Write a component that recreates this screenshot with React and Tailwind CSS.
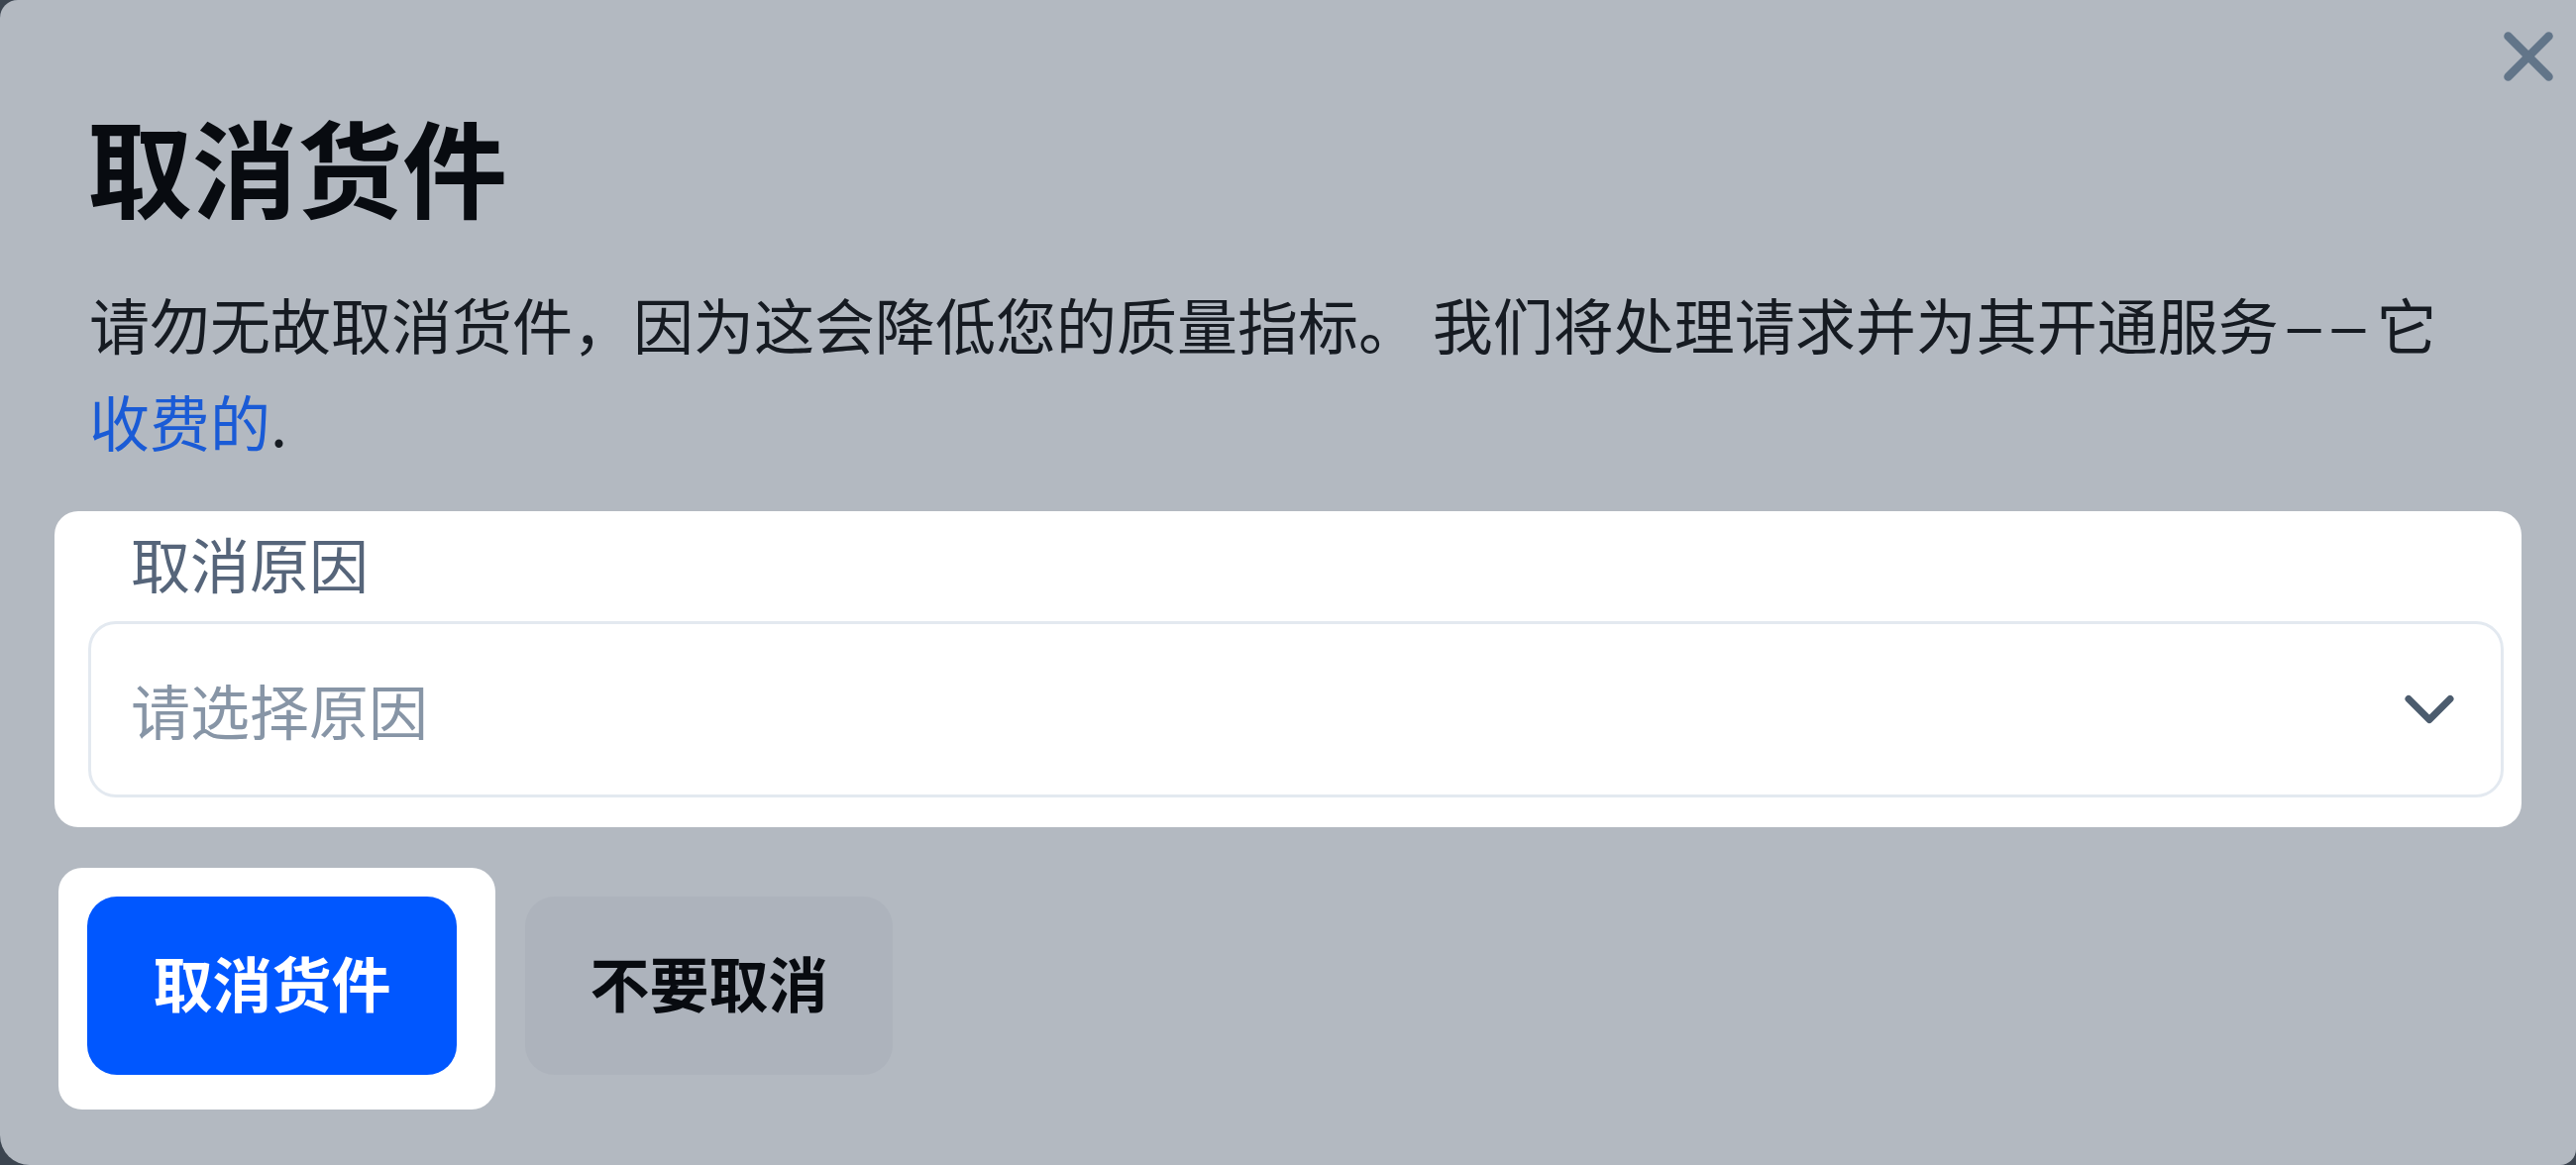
import React from "react";
import { X, ChevronDown } from "lucide-react";

export default function App() {
  return (
    <div className="w-[2600px] h-[1176px] bg-[#3c4550] overflow-hidden font-['Noto_Sans_CJK_SC',sans-serif]">
      <div className="relative w-[2600px] h-[1176px] bg-[#b3b9c1] rounded-tl-[18px] rounded-bl-[30px] rounded-br-[16px] pt-[113px]">
        <button className="absolute right-[7px] top-[16px] text-[#627589]">
          <X size={82} strokeWidth={2.5} />
        </button>

        <h1 className="pl-[88px] text-[106px] leading-[106px] font-bold text-[#080b10]">取消货件</h1>

        <p className="mt-[59px] pl-[90px] pr-[60px] text-[61px] leading-[98px] text-[#161b22]">
          请勿无故取消货件，因为这会降低您的质量指标。 我们将处理请求并为其开通服务
          <span className="pl-[9px] tracking-[11px] leading-none align-[3px] font-['Liberation_Sans',sans-serif]">––</span>它
          <br />
          <span className="text-[#1a5bd6]">收费的</span>.
        </p>

        <div className="mt-[42px] ml-[55px] w-[2490px] bg-white rounded-[24px] pt-[12px] pb-[30px] pl-[34px] pr-[18px]">
          <div className="pl-[43px] text-[60px] leading-[80px] text-[#56657a]">取消原因</div>
          <div className="mt-[19px] h-[178px] border-[3px] border-[#e3e9f0] rounded-[28px] flex items-center justify-between pl-[40px] pr-[30px]">
            <span className="text-[60px] text-[#8795a6]">请选择原因</span>
            <ChevronDown size={84} strokeWidth={2} className="text-[#4c5c6e]" />
          </div>
        </div>

        <div className="mt-[41px] ml-[59px] flex items-start gap-[30px]">
          <div className="bg-white rounded-[24px] pt-[29px] pb-[35px] pl-[29px] pr-[39px]">
            <button className="w-[373px] h-[180px] rounded-[30px] bg-[#0057ff] text-white text-[60px] font-bold flex items-center justify-center pb-[8px]">
              取消货件
            </button>
          </div>
          <button className="mt-[29px] w-[371px] h-[180px] rounded-[30px] bg-[#adb3bc] text-[#080b10] text-[60px] font-bold flex items-center justify-center pb-[8px]">
            不要取消
          </button>
        </div>
      </div>
    </div>
  );
}
